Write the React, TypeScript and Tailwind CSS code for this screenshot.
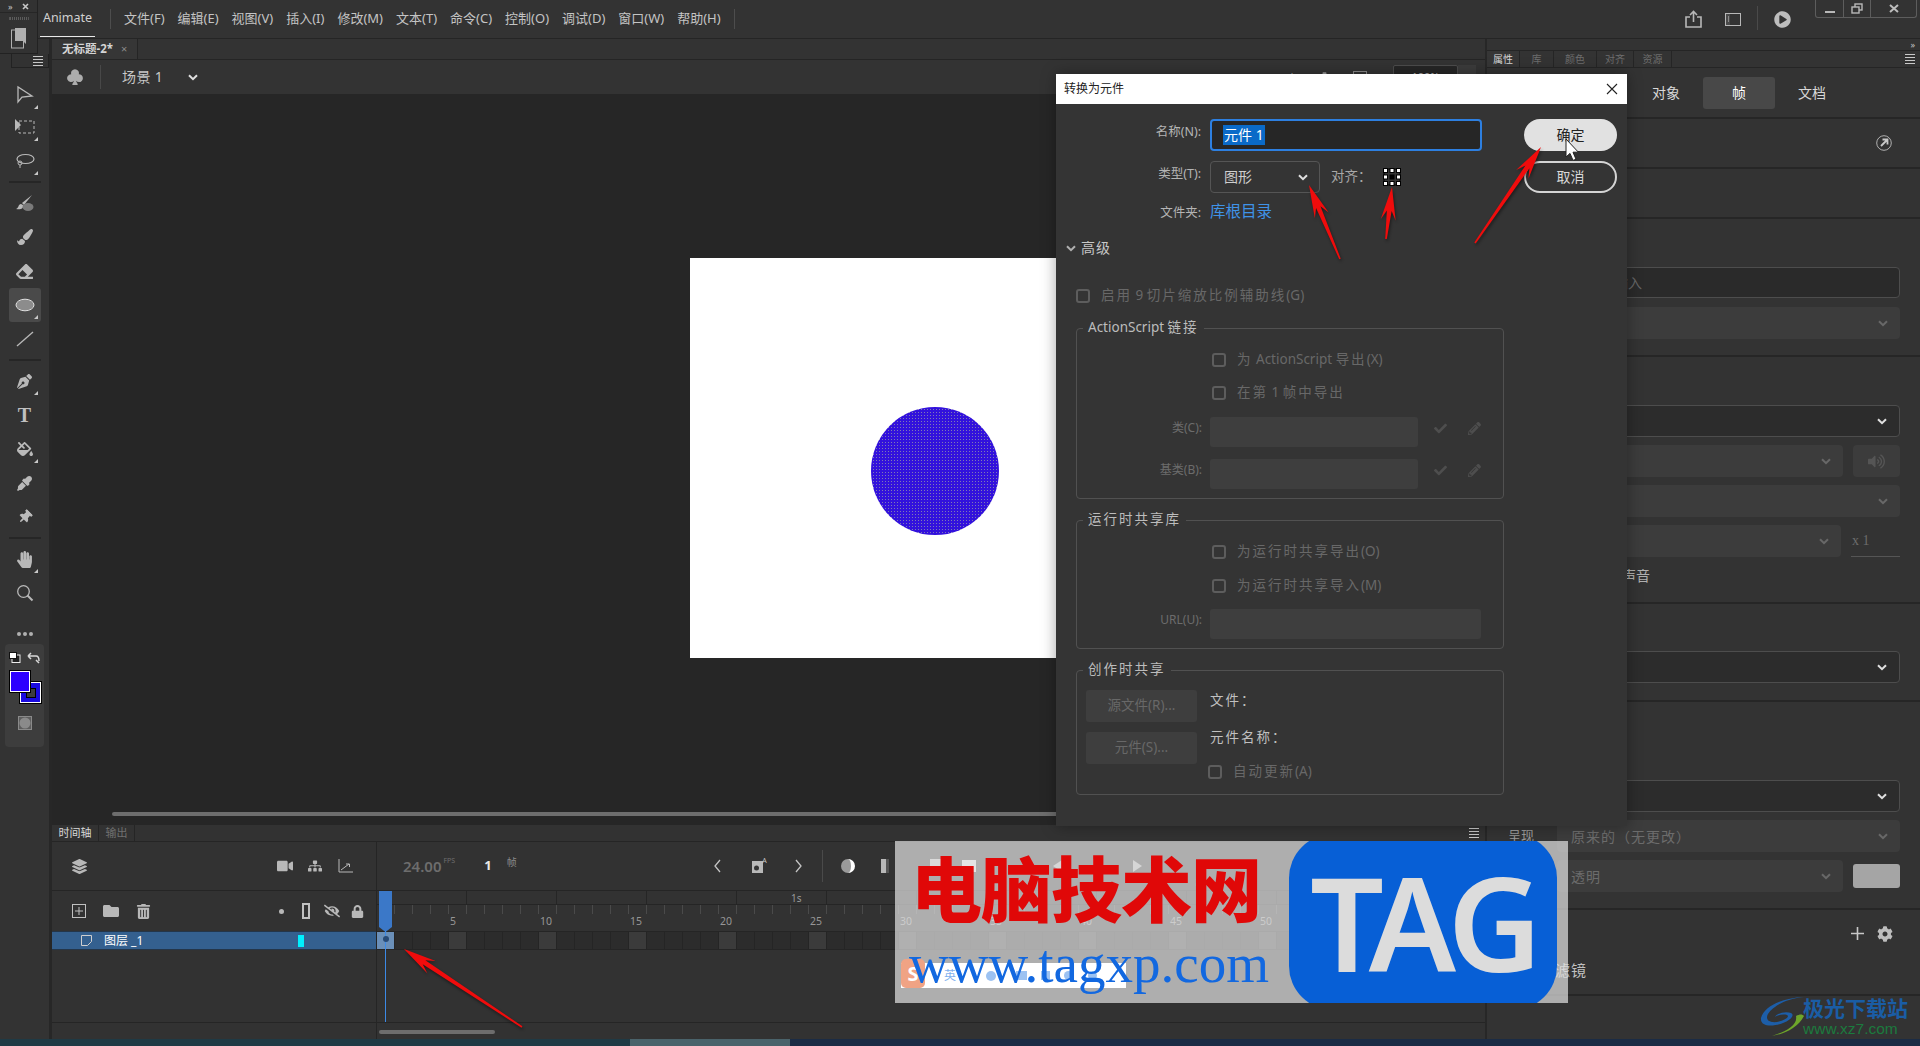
import React from "react";
import {
  FaHandPaper, FaPaintBrush, FaEraser, FaFillDrip, FaPenNib, FaEyeDropper, FaThumbtack, FaCog, FaLock,
  FaTrashAlt, FaFolder, FaVideo, FaLayerGroup, FaSitemap, FaEyeSlash, FaCheck, FaPencilAlt, FaVolumeUp, FaPlayCircle,
} from "react-icons/fa";
import { BsSuitClubFill } from "react-icons/bs";

const Chevron = ({ c = "#e0e0e0", w = 10 }: { c?: string; w?: number }) => (
  <svg width={w} height={w * 0.7} viewBox="0 0 10 7" fill="none"><path d="M1 1.2l4 4 4-4" stroke={c} strokeWidth="2" /></svg>
);
const Corner = () => (
  <span className="absolute right-[3px] bottom-[3px] w-0 h-0 border-l-[4px] border-l-transparent border-b-[4px] border-b-[#c8c8c8]" />
);
const Burger = () => (
  <div className="flex flex-col gap-[2px] w-[10px]">
    <span className="h-px bg-[#c8c8c8]" /><span className="h-px bg-[#c8c8c8]" /><span className="h-px bg-[#c8c8c8]" /><span className="h-px bg-[#c8c8c8]" />
  </div>
);
const T = ({ s }: { s: string }) => (
  <>
    {s.split(/([\u4e00-\u9fff]+)/).map((p, i) =>
      /[\u4e00-\u9fff]/.test(p) ? <span key={i} className="tracking-[2px]">{p}</span> : <span key={i}>{p}</span>
    )}
  </>
);

const Tool = ({ children, corner, active }: { children: React.ReactNode; corner?: boolean; active?: boolean }) => (
  <div className={`relative w-[32px] h-[34px] mx-auto flex items-center justify-center rounded-[3px] text-[#b9b9b9] ${active ? "bg-[#4a4a4a]" : ""}`}>
    {children}
    {corner && <Corner />}
  </div>
);
const ToolDivider = () => <div className="w-[32px] h-[2px] bg-[#262626] mx-auto my-[3px]" />;

function Toolbar() {
  return (
    <div className="w-[52px] shrink-0 bg-[#333333] border-r-[3px] border-[#272727] pt-[39px] flex flex-col">
      <Tool corner><svg width="18" height="20" viewBox="0 0 18 20" fill="none"><path d="M2 2v15l4-5 10-1z" stroke="#b9b9b9" strokeWidth="1.3" /></svg></Tool>
      <div className="-mt-[2px]"><Tool corner><svg width="22" height="18" viewBox="0 0 22 18" fill="none"><path d="M1 1v12l6-6z" fill="#b9b9b9" /><rect x="5" y="3" width="15" height="12" stroke="#b9b9b9" strokeDasharray="3 2" /></svg></Tool></div>
      <Tool corner><svg width="20" height="16" viewBox="0 0 20 16" fill="none"><ellipse cx="10.5" cy="6" rx="8.5" ry="4.5" stroke="#b9b9b9" strokeWidth="1.2" /><circle cx="5" cy="10" r="2" stroke="#b9b9b9" /><path d="M5 12v3" stroke="#b9b9b9" /></svg></Tool>
      <ToolDivider />
      <Tool><svg width="20" height="18" viewBox="0 0 20 18"><path d="M17 1 7 9l2 2z" fill="#b9b9b9" /><path d="M6 10c-3 0-2 4-5 5 4 1 8 0 7-4z" fill="#b9b9b9" /><ellipse cx="13" cy="13" rx="5.5" ry="4" fill="#7a7a7a" /></svg></Tool>
      <Tool><FaPaintBrush size={16} /></Tool>
      <Tool><FaEraser size={17} /></Tool>
      <Tool active corner><svg width="20" height="14" viewBox="0 0 20 14"><ellipse cx="10" cy="7" rx="9" ry="5.8" fill="#8c8c8c" stroke="#e0e0e0" /></svg></Tool>
      <Tool><svg width="18" height="16" viewBox="0 0 18 16"><path d="M1 15 17 1" stroke="#b9b9b9" strokeWidth="1.3" /></svg></Tool>
      <ToolDivider />
      <Tool corner><FaPenNib size={15} /></Tool>
      <Tool><span className="font-['Liberation_Serif',serif] text-[20px] font-bold leading-none text-[#c0c0c0]">T</span></Tool>
      <Tool corner><FaFillDrip size={16} /></Tool>
      <Tool><FaEyeDropper size={15} /></Tool>
      <Tool><FaThumbtack size={14} className="rotate-45" /></Tool>
      <ToolDivider />
      <Tool corner><FaHandPaper size={17} /></Tool>
      <Tool><svg width="18" height="18" viewBox="0 0 18 18" fill="none"><circle cx="7.5" cy="7.5" r="5.8" stroke="#b9b9b9" strokeWidth="1.3" /><path d="m11.5 11.5 5 5" stroke="#b9b9b9" strokeWidth="2" /></svg></Tool>
      <div className="h-[20px]" />
      <div className="flex justify-center gap-[2px] h-[8px] items-center">
        <span className="w-[4px] h-[4px] rounded-full bg-[#b0b0b0]" /><span className="w-[4px] h-[4px] rounded-full bg-[#b0b0b0]" /><span className="w-[4px] h-[4px] rounded-full bg-[#b0b0b0]" />
      </div>
      <div className="mx-[5px] mt-[6px] h-[103px] rounded-[4px] bg-[#3d3d3d] flex flex-col">
        <div className="flex items-center justify-between px-[4px] pt-[7px] h-[20px]">
          <svg width="12" height="11" viewBox="0 0 12 11"><rect x="3" y="3" width="8" height="7.5" fill="#222" stroke="#eee" /><rect x="0.5" y="0.5" width="7" height="6" fill="#fff" stroke="#111" /></svg>
          <svg width="13" height="12" viewBox="0 0 13 12" fill="none"><path d="M1 4h8c2 0 3 2 3 5M1 4l3-3M1 4l3 3M9 8l3 3" stroke="#d8d8d8" strokeWidth="1.5" /></svg>
        </div>
        <div className="relative h-[33px] mt-[7px]">
          <span className="absolute left-[15px] top-[11px] w-[21px] h-[21px] bg-[#1a0ae0] border border-white outline outline-1 outline-black flex items-center justify-center"><span className="w-[10px] h-[10px] bg-[#3d3d3d] border border-black" /></span>
          <span className="absolute left-[5px] top-0 w-[20px] h-[21px] bg-[#2c00ff] border border-white outline outline-1 outline-black" />
        </div>
        <div className="flex justify-center mt-[12px]"><svg width="14" height="14" viewBox="0 0 14 14"><rect width="14" height="14" fill="#8a8a8a" /><rect x="1" y="1" width="12" height="12" fill="#5d5d5d" /><circle cx="7" cy="7" r="5.5" fill="#8a8a8a" /></svg></div>
      </div>
    </div>
  );
}

const menus = ["文件(F)", "编辑(E)", "视图(V)", "插入(I)", "修改(M)", "文本(T)", "命令(C)", "控制(O)", "调试(D)", "窗口(W)", "帮助(H)"];

function TopBar() {
  return (
    <div className="h-[39px] shrink-0 bg-[#333333] border-b border-[#252525] flex items-start pl-[40px]">
      <div className="w-[55px] h-[37px] border-b border-[#e8e8e8] flex items-center justify-center text-[12.5px] text-[#d0d0d0]">Animate</div>
      <div className="w-px h-[20px] bg-[#4d4d4d] mt-[9px] ml-[15px]" />
      <div className="flex gap-[13px] ml-[13px] mt-[9px] h-[20px] items-center text-[13px] text-[#c4c4c4] whitespace-nowrap">
        {menus.map((m) => <span key={m}>{m}</span>)}
      </div>
      <div className="w-px h-[20px] bg-[#4d4d4d] mt-[9px] ml-[13px]" />
      <div className="ml-auto flex items-start pr-[3px]">
        <svg className="mt-[10px]" width="17" height="18" viewBox="0 0 17 18" fill="none"><path d="M5 7H1v10h15V7h-4M8.5 12V1.5M5 5l3.5-3.5L12 5" stroke="#b8b8b8" strokeWidth="1.6" /></svg>
        <svg className="ml-[23px] mt-[13px]" width="16" height="13" viewBox="0 0 16 13" fill="none"><rect x=".5" y=".5" width="15" height="12" stroke="#b8b8b8" /><path d="M1 1h4v11H1z" fill="#4a4a4a" /><path d="M3 4h1M3 6h1M3 8h1" stroke="#ccc" /></svg>
        <div className="ml-[16px] mt-[6px] w-px h-[24px] bg-[#4a4a4a]" />
        <FaPlayCircle className="ml-[16px] mt-[11px] text-[#bdbdbd]" size={17} />
        <div className="ml-[24px] w-[102px] h-[18px] border border-t-0 border-[#5d5d5d] rounded-b-[3px] flex">
          <div className="w-[28px] border-r border-[#5d5d5d] flex items-center justify-center pt-[4px]"><span className="w-[10px] h-[2px] bg-[#b8b8b8] mt-[2px]" /></div>
          <div className="w-[27px] border-r border-[#5d5d5d] flex items-center justify-center"><svg width="12" height="11" viewBox="0 0 12 11" fill="none"><rect x="4" y="1" width="7" height="6" stroke="#b8b8b8" strokeWidth="1.4" /><rect x="1" y="4" width="7" height="6" fill="#333" stroke="#b8b8b8" strokeWidth="1.4" /></svg></div>
          <div className="flex-1 flex items-center justify-center"><svg width="10" height="9" viewBox="0 0 10 9" fill="none"><path d="m1 1 8 7M9 1 1 8" stroke="#bdbdbd" strokeWidth="2" /></svg></div>
        </div>
      </div>
    </div>
  );
}

function Canvas() {
  return (
    <div className="flex-1 bg-[#262626] relative pl-[638px] pt-[164px]">
      <div className="relative w-[550px] h-[400px] bg-white">
        <svg className="absolute left-[180px] top-[148px]" width="130" height="130" viewBox="0 0 130 130">
          <defs>
            <pattern id="dots" width="3" height="3" patternUnits="userSpaceOnUse">
              <rect width="3" height="3" fill="#3211dc" />
              <rect width="1" height="1" fill="#7f79b4" />
            </pattern>
          </defs>
          <circle cx="65" cy="65" r="64" fill="url(#dots)" />
        </svg>
      </div>
      <div className="absolute left-[60px] right-[10px] bottom-[9px] h-[4px] rounded-full bg-[#6d6d6d]" />
    </div>
  );
}

const frames = Array.from({ length: 62 }, (_, i) => i);

function Timeline() {
  return (
    <div className="h-[214px] shrink-0 bg-[#323232] flex flex-col">
      <div className="h-[17px] shrink-0 border-b border-[#252525] flex items-stretch text-[11px] relative">
        <div className="w-[47px] flex items-center justify-center text-[#d8d8d8] border-r border-[#252525]">时间轴</div>
        <div className="w-[36px] flex items-center justify-center text-[#707070] border-r border-[#252525]">输出</div>
        <div className="ml-auto pr-[6px] flex items-center"><Burger /></div>
      </div>
      <div className="flex-1 flex min-h-0">
        <div className="w-[325px] shrink-0 border-r border-[#252525] flex flex-col">
          <div className="h-[49px] shrink-0 border-b border-[#252525] flex items-center text-[#b8b8b8]">
            <FaLayerGroup size={15} className="ml-[20px]" />
            <FaVideo size={16} className="ml-[190px]" />
            <FaSitemap size={14} className="ml-[15px]" />
            <svg className="ml-[16px]" width="15" height="14" viewBox="0 0 15 14" fill="none"><path d="M1 0v13h14" stroke="#b8b8b8" /><path d="m3 11 8-6M8 5h3.5v3" stroke="#b8b8b8" /></svg>
          </div>
          <div className="h-[40px] shrink-0 flex items-center text-[#b8b8b8]">
            <svg className="ml-[20px]" width="14" height="14" viewBox="0 0 14 14" fill="none"><rect x=".5" y=".5" width="13" height="13" stroke="#c0c0c0" /><path d="M7 3v8M3 7h8" stroke="#c0c0c0" /></svg>
            <FaFolder size={16} className="ml-[17px]" />
            <FaTrashAlt size={15} className="ml-[17px]" />
            <span className="ml-[128px] w-[5px] h-[5px] rounded-full bg-[#b8b8b8]" />
            <span className="ml-[18px] w-[8px] h-[16px] border-2 border-[#c0c0c0]" />
            <FaEyeSlash size={16} className="ml-[14px]" />
            <FaLock size={13} className="ml-[11px]" />
          </div>
          <div className="h-[19px] shrink-0 bg-[#34608f] border-y border-[#24364a] flex items-center relative text-[12px] text-white">
            <svg className="ml-[29px]" width="11" height="11" viewBox="0 0 11 11" fill="none"><path d="M.5.5h10v6l-4 4h-6z" stroke="#cfcfcf" /></svg>
            <span className="ml-[12px]">图层 _1</span>
            <span className="absolute left-[246px] top-[3px] w-[6px] h-[12px] bg-[#00f0ff]" />
          </div>
          <div className="flex-1" />
          <div className="h-[17px] shrink-0 border-t border-[#252525]" />
        </div>
        <div className="flex-1 flex flex-col min-w-0 relative overflow-hidden">
          <div className="h-[49px] shrink-0 border-b border-[#252525] flex items-center relative text-[#bdbdbd]">
            <span className="ml-[26px] text-[15px] font-semibold text-[#6d6d6d]">24.00</span>
            <span className="text-[7px] text-[#6d6d6d] ml-[2px] -mt-[9px]">FPS</span>
            <span className="ml-[29px] text-[13px] font-bold text-[#e8e8e8]">1</span>
            <span className="ml-[15px] text-[10px] text-[#8a8a8a] -mt-[8px]">帧</span>
            <span className="ml-[197px] flex"><Svg1 d="M6 1 1 7l5 6" /></span>
            <span className="ml-[31px] relative flex"><svg width="14" height="14" viewBox="0 0 14 14"><rect y="2" width="11" height="12" fill="#b8b8b8" /><circle cx="4.5" cy="9" r="2.5" fill="#333" /></svg><span className="absolute -right-[1px] -top-[3px] text-[7px] text-[#c8c8c8]">A</span></span>
            <span className="ml-[29px] flex"><Svg1 d="m1 1 5 6-5 6" /></span>
            <span className="ml-[20px] w-px h-[32px] bg-[#4a4a4a]" />
            <span className="ml-[18px] w-[14px] h-[14px] rounded-full bg-[#9a9a9a] border-r-[4px] border-white" />
            <span className="ml-[26px] w-[8px] h-[14px] bg-[#b8b8b8] border-r-[3px] border-[#555]" />
            <span className="ml-[41px] w-[14px] h-[14px] bg-[#c8c8c8]" />
            <span className="ml-[18px] w-[14px] h-[12px] bg-[#e8e8e8]" />
            <span className="ml-[77px] w-0 h-0 border-y-[6px] border-y-transparent border-r-[9px] border-r-[#b8b8b8]" />
            <span className="ml-[31px] w-0 h-0 border-y-[7px] border-y-transparent border-l-[11px] border-l-[#ff7777]" />
            <span className="ml-[29px] w-0 h-0 border-y-[6px] border-y-transparent border-l-[9px] border-l-[#b8b8b8]" />
            <span className="ml-[173px] w-[12px] h-[12px] rounded-full border-2 border-[#4a89dc]" />
            <span className="ml-[2px] w-[40px] h-[2px] bg-[#4a89dc]" />
            <span className="w-[10px] h-[10px] rounded-full border-2 border-[#4a89dc]" />
            <span className="ml-[60px] w-0 h-0 border-x-[9px] border-x-transparent border-b-[12px] border-b-[#3b6fb5]" />
          </div>
          <div className="h-[40px] shrink-0 relative">
            <div className="flex h-[14px] border-b border-[#252525]">
              {Array.from({ length: 13 }, (_, i) => <div key={i} className="w-[90px] shrink-0 border-r border-[#252525]" />)}
            </div>
            <span className="absolute left-[414px] top-[0px] text-[10px] text-[#9a9a9a]">1s</span>
            <div className="flex h-[9px]">
              {frames.map((i) => <div key={i} className="w-[18px] shrink-0 border-r border-[#4a4a4a]" />)}
            </div>
            <div className="flex">
              {frames.map((i) => <span key={i} className="w-[18px] shrink-0 text-[10.5px] leading-[14px] pl-[1px] text-[#969696] whitespace-nowrap">{(i + 1) % 5 === 0 ? i + 1 : ""}</span>)}
            </div>
          </div>
          <div className="h-[19px] shrink-0 flex border-y border-[#252525] bg-[#2c2c2c]">
            {frames.map((i) => (
              <div key={i} className={`w-[18px] shrink-0 border-r border-[#252525] ${i === 0 ? "bg-[#6a8fb8]" : (i + 1) % 5 === 0 ? "bg-[#3b3b3b]" : ""}`} />
            ))}
          </div>
          <div className="flex-1" />
          <div className="h-[17px] shrink-0 border-t border-[#252525] relative">
            <span className="absolute left-[2px] top-[7px] w-[116px] h-[4px] rounded-full bg-[#6d6d6d]" />
          </div>
          <div className="absolute left-[2px] top-[49px] flex flex-col items-center w-[13px]">
            <svg width="13" height="41" viewBox="0 0 13 41"><path d="M0 0h13v36l-6.5 5L0 36z" fill="#3b78c8" /></svg>
          </div>
          <span className="absolute left-[8px] top-[89px] bottom-[17px] w-px bg-[#3c8ae6]" />
          <span className="absolute left-[6px] top-[94px] w-[6px] h-[6px] rounded-full bg-[#274a76]" />
        </div>
      </div>
    </div>
  );
}
const Svg1 = ({ d }: { d: string }) => (
  <svg width="7" height="14" viewBox="0 0 7 14" fill="none"><path d={d} stroke="#c4c4c4" strokeWidth="1.3" /></svg>
);

const DarkSelect = ({ mt = "" }: { mt?: string }) => (
  <div className={`h-[32px] bg-[#2c2c2c] border border-[#4d4d4d] rounded-[4px] flex items-center justify-end pr-[12px] ${mt}`}><Chevron /></div>
);
const DisSelect = ({ children, cls = "" }: { children?: React.ReactNode; cls?: string }) => (
  <div className={`h-[32px] bg-[#3c3c3c] rounded-[4px] flex items-center justify-between pl-[14px] pr-[12px] text-[14px] text-[#6c6c6c] flex-1 ${cls}`}>
    <span className="tracking-[1px]">{children}</span><Chevron c="#686868" />
  </div>
);
const Sep = () => <div className="h-[2px] shrink-0 bg-[#262626]" />;

function RightPanel() {
  return (
    <div className="w-[435px] shrink-0 bg-[#333333] border-l-2 border-[#272727] flex flex-col text-[#bdbdbd]">
      <div className="h-[12px] shrink-0 border-b border-[#252525] flex items-center justify-end pr-[5px] text-[9px] leading-none text-[#c4c4c4]">»</div>
      <div className="h-[17px] shrink-0 border-b border-[#252525] flex text-[10px] text-[#6e6e6e] items-stretch">
        <span className="w-[33px] flex items-center justify-center text-[#d8d8d8] border-r border-[#252525] bg-[#363636]">属性</span>
        <span className="w-[34px] flex items-center justify-center border-r border-[#252525]">库</span>
        <span className="w-[43px] flex items-center justify-center border-r border-[#252525]">颜色</span>
        <span className="w-[37px] flex items-center justify-center border-r border-[#252525]">对齐</span>
        <span className="w-[38px] flex items-center justify-center border-r border-[#252525]">资源</span>
        <div className="ml-auto pr-[5px] flex items-center"><Burger /></div>
      </div>
      <div className="h-[49px] shrink-0 flex items-center text-[14px] text-[#d8d8d8]">
        <span className="ml-[165px]">对象</span>
        <span className="ml-[23px] w-[72px] h-[32px] rounded-[3px] bg-[#484848] flex items-center justify-center text-white">帧</span>
        <span className="ml-[23px]">文档</span>
      </div>
      <Sep />
      <div className="h-[48px] shrink-0 flex items-center justify-end pr-[28px]">
        <svg width="16" height="16" viewBox="0 0 16 16" fill="none"><circle cx="8" cy="8" r="7.3" stroke="#b0b0b0" /><path d="M5 11l6-6M6.5 4.5h5v5" stroke="#c8c8c8" strokeWidth="1.8" /></svg>
      </div>
      <Sep />
      <div className="h-[48px] shrink-0" />
      <Sep />
      <div className="h-[136px] shrink-0 pt-[48px] pl-[70px] pr-[20px]">
        <div className="h-[31px] bg-[#2a2a2a] border border-[#4d4d4d] rounded-[4px] flex items-center pl-[56px] text-[14px] text-[#666]">输入</div>
        <div className="mt-[9px] flex"><DisSelect /></div>
      </div>
      <Sep />
      <div className="h-[245px] shrink-0 pt-[48px] pl-[70px] pr-[20px] flex flex-col">
        <DarkSelect />
        <div className="mt-[8px] flex gap-[10px]"><DisSelect /><div className="w-[47px] h-[32px] rounded-[4px] bg-[#3c3c3c] flex items-center justify-center"><FaVolumeUp size={17} className="text-[#555]" /></div></div>
        <div className="mt-[8px] flex"><DisSelect /></div>
        <div className="mt-[8px] flex items-center gap-[10px]"><DisSelect /><div className="w-[49px] h-[32px] border-b border-[#555] text-[14px] text-[#6c6c6c] font-['Liberation_Serif',serif] flex items-center pl-[1px]">x 1</div></div>
        <div className="mt-[8px] text-[14px] text-[#b0b0b0] pl-[37px]">同步声音</div>
      </div>
      <Sep />
      <div className="h-[96px] shrink-0 pt-[47px] pl-[70px] pr-[20px]"><DarkSelect /></div>
      <Sep />
      <div className="h-[206px] shrink-0 pt-[78px] pl-[21px] pr-[20px] flex flex-col gap-[8px]">
        <div className="ml-[49px]"><DarkSelect /></div>
        <div className="flex items-center">
          <span className="w-[49px] text-[13px] text-[#9a9a9a]">呈现</span>
          <DisSelect>原来的（无更改）</DisSelect>
        </div>
        <div className="flex items-center gap-[10px] ml-[49px]">
          <DisSelect>透明</DisSelect>
          <div className="w-[47px] h-[24px] rounded-[3px] bg-[#a5a5a5]" />
        </div>
      </div>
      <Sep />
      <div className="h-[84px] shrink-0 relative pl-[25px] pt-[13px]">
        <div className="flex items-center text-[14px] text-[#f0f0f0]">
          <Chevron c="#d0d0d0" />
          <span className="ml-[6px]">滤镜</span>
          <span className="ml-auto mr-[27px] flex items-center gap-[13px]">
            <svg width="13" height="13" viewBox="0 0 13 13"><path d="M6.5 0v13M0 6.5h13" stroke="#c8c8c8" strokeWidth="1.6" /></svg>
            <FaCog size={16} className="text-[#bdbdbd]" />
          </span>
        </div>
        <div className="mt-[15px] -ml-[5px] text-[15px] tracking-[1px] text-[#c0c0c0]">未添加滤镜</div>
      </div>
      <Sep />
      <div className="flex-1" />
    </div>
  );
}

const Check = ({ label, cls = "" }: { label: string; cls?: string }) => (
  <div className={`flex items-center gap-[11px] h-[20px] text-[13.5px] text-[#686868] whitespace-nowrap ${cls}`}>
    <span className="w-[14px] h-[14px] border-2 border-[#5d5d5d] rounded-[3px] shrink-0" />
    <span className="pb-[2px]"><T s={label} /></span>
  </div>
);
const Group = ({ title, h, children }: { title: string; h: string; children: React.ReactNode }) => (
  <div className={`relative ml-[20px] w-[428px] border border-[#515151] rounded-[4px] ${h}`}>
    <span className="absolute left-[6px] -top-[12px] h-[20px] px-[5px] bg-[#343434] text-[13.5px] text-[#bcbcbc] leading-[20px] whitespace-nowrap"><T s={title} /></span>
    {children}
  </div>
);
const DisInput = ({ label, w, icons, mt }: { label: string; w: string; icons?: boolean; mt: string }) => (
  <div className={`flex items-center ${mt}`}>
    <span className="w-[125px] text-right text-[12px] text-[#6c6c6c] pb-[8px]">{label}</span>
    <div className={`ml-[8px] h-[30px] bg-[#3e3e3e] rounded-[3px] ${w}`} />
    {icons && (
      <>
        <FaCheck size={13} className="ml-[16px] mb-[8px] text-[#4e4e4e]" />
        <FaPencilAlt size={13} className="ml-[21px] mb-[8px] text-[#4e4e4e]" />
      </>
    )}
  </div>
);
const regs = [1.5, 8, 14.5];

function Dialog() {
  return (
    <div className="absolute left-[1056px] top-[74px] w-[571px] h-[752px] bg-[#343434] shadow-[0_0_14px_rgba(0,0,0,0.35)] flex flex-col">
      <div className="h-[30px] shrink-0 bg-white flex items-center justify-between pl-[8px] pr-[9px] text-[12px] text-[#222]">
        <span>转换为元件</span>
        <svg width="12" height="12" viewBox="0 0 12 12" fill="none"><path d="m1 1 10 10M11 1 1 11" stroke="#222" strokeWidth="1.1" /></svg>
      </div>
      <div className="flex items-center mt-[15px] h-[32px]">
        <span className="w-[145px] text-right text-[12.5px] text-[#b4b4b4] pb-[6px]">名称(N):</span>
        <div className="ml-[9px] w-[272px] h-[32px] bg-[#262626] border-2 border-[#2d7fe0] rounded-[4px] flex items-center pl-[11px]">
          <span className="bg-[#0a6ac8] text-white text-[14px] leading-[19px] px-[1px] pb-[1px]">元件 1</span>
        </div>
        <button className="ml-[42px] w-[93px] h-[32px] rounded-full bg-[#e1e1e1] text-[14px] text-[#222] pb-[2px]">确定</button>
      </div>
      <div className="flex items-center mt-[10px] h-[32px]">
        <span className="w-[145px] text-right text-[12.5px] text-[#b4b4b4] pb-[6px]">类型(T):</span>
        <div className="ml-[9px] w-[110px] h-[32px] border border-[#555] rounded-[4px] flex items-center justify-between pl-[13px] pr-[11px] text-[14px] text-[#cfcfcf]">
          <span className="pb-[2px]">图形</span><Chevron />
        </div>
        <span className="ml-[11px] text-[13.5px] text-[#a8a8a8] pb-[2px]">对齐：</span>
        <svg className="ml-[10px]" width="20" height="20" viewBox="0 0 20 20" fill="none">
          <rect x="2" y="2" width="16" height="16" stroke="#111" strokeWidth="1.5" />
          {regs.map((y) => regs.map((x) => (
            <rect key={`${x}-${y}`} x={x} y={y} width="4" height="4" fill={x === 8 && y === 8 ? "#000" : "#fff"} stroke="#000" strokeWidth="1" />
          )))}
        </svg>
        <button className="ml-auto mr-[10px] w-[93px] h-[32px] rounded-full border-2 border-[#d4d4d4] text-[14px] text-[#d8d8d8] pb-[2px]">取消</button>
      </div>
      <div className="flex items-center mt-[10px] h-[20px]">
        <span className="w-[145px] text-right text-[12.5px] text-[#b4b4b4]">文件夹:</span>
        <span className="ml-[9px] text-[15.5px] text-[#3f93e8] pb-[2px]">库根目录</span>
      </div>
      <div className="flex items-center mt-[15px] h-[20px] pl-[10px] text-[14px] text-[#c8c8c8]">
        <Chevron c="#b0b0b0" />
        <span className="ml-[5px] pb-[2px] tracking-[1px]">高级</span>
      </div>
      <Check label="启用 9 切片缩放比例辅助线(G)" cls="mt-[28px] ml-[20px]" />
      <div className="mt-[22px]">
        <Group title="ActionScript 链接" h="h-[171px]">
          <div className="pt-[21px] pl-[135px]">
            <Check label="为 ActionScript 导出(X)" />
            <Check label="在第 1 帧中导出" cls="mt-[13px]" />
          </div>
          <DisInput label="类(C):" w="w-[208px]" icons mt="mt-[14px]" />
          <DisInput label="基类(B):" w="w-[208px]" icons mt="mt-[12px]" />
        </Group>
      </div>
      <div className="mt-[21px]">
        <Group title="运行时共享库" h="h-[129px]">
          <div className="pt-[21px] pl-[135px]">
            <Check label="为运行时共享导出(O)" />
            <Check label="为运行时共享导入(M)" cls="mt-[14px]" />
          </div>
          <DisInput label="URL(U):" w="w-[271px]" mt="mt-[13px]" />
        </Group>
      </div>
      <div className="mt-[21px]">
        <Group title="创作时共享" h="h-[125px]">
          <div className="flex pl-[9px] pt-[19px]">
            <div className="w-[111px] flex flex-col gap-[10px] shrink-0">
              <div className="h-[32px] bg-[#3e3e3e] rounded-[3px] flex items-center justify-center text-[13.5px] text-[#686868] pb-[2px]">源文件(R)...</div>
              <div className="h-[32px] bg-[#3e3e3e] rounded-[3px] flex items-center justify-center text-[13.5px] text-[#686868] pb-[2px]">元件(S)...</div>
            </div>
            <div className="ml-[13px] flex flex-col">
              <span className="h-[22px] text-[13.5px] text-[#c0c0c0] leading-[20px]"><T s="文件：" /></span>
              <span className="mt-[15px] h-[22px] text-[13.5px] text-[#c0c0c0] leading-[20px]"><T s="元件名称：" /></span>
              <Check label="自动更新(A)" cls="mt-[13px] -ml-[2px]" />
            </div>
          </div>
        </Group>
      </div>
    </div>
  );
}

const arrowPts = (x1: number, y1: number, x2: number, y2: number) => {
  const l = Math.hypot(x2 - x1, y2 - y1);
  const ux = (x2 - x1) / l, uy = (y2 - y1) / l, nx = -uy, ny = ux;
  const p = (a: number, b: number) => `${x2 - ux * a + nx * b},${y2 - uy * a + ny * b}`;
  return [
    `${x1 + nx * 0.8},${y1 + ny * 0.8}`,
    p(24, 2.4), p(33, 7.5), p(0, 0), p(33, -7.5), p(24, -2.4),
    `${x1 - nx * 0.8},${y1 - ny * 0.8}`,
  ].join(" ");
};
const arrows = [
  [1340, 259, 1309, 185],
  [1386, 239, 1392, 187],
  [1475, 243, 1541, 147],
  [522, 1027, 404, 949],
];

function Overlays() {
  return (
    <>
      {/* floating collapsed panel */}
      <div className="absolute left-0 top-0 w-[38px] h-[54px] bg-[#323232] border-r border-b border-[#222] flex flex-col">
        <div className="h-[13px] flex items-center justify-between px-[8px] text-[9px] leading-none text-[#c8c8c8] border-b border-[#262626]">
          <span>»</span>
          <svg width="7" height="7" viewBox="0 0 7 7"><path d="m1 1 5 5M6 1 1 6" stroke="#c8c8c8" strokeWidth="1.6" /></svg>
        </div>
        <div className="mx-auto mt-[4px] w-[20px] h-[3px] border-x border-[#555] bg-[repeating-linear-gradient(90deg,#5c5c5c_0_1px,transparent_1px_2px)]" />
        <div className="mx-auto mt-[7px]">
          <svg width="16" height="22" viewBox="0 0 16 22" fill="none"><rect x="0.5" y="3" width="12" height="18" stroke="#b0b0b0" /><path d="M4 1h11v16l-3-3H4z" fill="#b0b0b0" /></svg>
        </div>
      </div>
      <div className="absolute left-[11px] top-[54px] w-[38px] h-[14px] border-r border-b border-l border-[#222] bg-[#323232] flex items-center justify-end pr-[5px]"><Burger /></div>

      <Dialog />

      {/* site watermark */}
      <div className="absolute left-[895px] top-[841px] w-[673px] h-[162px] bg-[rgba(227,227,227,0.7)] flex overflow-hidden">
        <div className="w-[394px] shrink-0 flex flex-col items-center">
          <span className="mt-[2px] ml-[-12px] font-['Noto_Sans_CJK_SC',sans-serif] font-black text-[71px] leading-[84px] text-[#e00808] whitespace-nowrap tracking-[-1px]">电脑技术网</span>
        </div>
        <div className="w-[268px] h-[176px] -mt-[7px] rounded-[44px] bg-[#075fd6] flex items-center justify-center font-['Noto_Sans',sans-serif] font-semibold text-[130px] leading-none text-[#dcdcdc] tracking-[-6px]">TAG</div>
      </div>
      <div className="absolute left-[901px] top-[963px] w-[225px] h-[25px] bg-white flex items-center text-[#7fb0ee] text-[12px]">
        <span className="w-[24px] h-[29px] -mt-[5px] rounded-[5px] bg-[#f0a384] text-white font-bold text-[20px] leading-[29px] text-center">S</span>
        <span className="ml-[19px]">英</span>
        <span className="ml-[30px] w-[10px] h-[10px] rounded-full bg-[#9cc2f2]" />
        <span className="ml-[20px] w-[11px] h-[9px] bg-[#9cc2f2]" />
        <span className="ml-[14px] w-[9px] h-[9px] bg-[#9cc2f2]" />
        <span className="ml-[14px] w-[9px] h-[9px] rounded-full bg-[#9cc2f2]" />
        <span className="ml-[15px] w-[9px] h-[9px] rounded-full bg-[#9cc2f2]" />
      </div>
      <span className="absolute left-[909px] top-[937px] font-['Liberation_Serif',serif] text-[55px] leading-[54px] text-[#1268e0] whitespace-nowrap">www.tagxp.com</span>

      {/* corner watermark */}
      <div className="absolute left-[1760px] top-[995px] w-[155px] h-[42px] flex items-center">
        <svg width="44" height="40" viewBox="0 0 44 40" fill="none">
          <path d="M44 1C22 2 4 10 1 22c-1 9 12 9 22 5 8-3 12-8 8-10-5-2-14 0-16 4 4-3 12-3 13-1 0 3-10 7-16 6-8-1-6-9 3-15C21 6 33 2 44 1z" fill="#1d5ea8" />
          <path d="M44 20c-6 12-20 18-32 20 12-4 26-10 24-20 4-2 6-2 8 0z" fill="#6ea62a" />
        </svg>
        <div className="flex flex-col ml-[-1px]">
          <span className="font-['Noto_Sans_CJK_SC',sans-serif] font-bold text-[21px] leading-[25px] text-[#1a5da5] whitespace-nowrap">极光下载站</span>
          <span className="font-['Liberation_Sans',sans-serif] text-[15.5px] leading-[18px] text-[#1c7a3e] whitespace-nowrap">www.xz7.com</span>
        </div>
      </div>

      {/* annotation arrows and pointer */}
      <svg className="absolute left-0 top-0 pointer-events-none" width="1920" height="1046">
        {arrows.map((a, i) => (
          <polygon key={i} points={arrowPts(a[0], a[1], a[2], a[3])} fill="#f00c0c" style={{ filter: "drop-shadow(1px 2px 1.5px rgba(0,0,0,.45))" }} />
        ))}
        <path d="M1566 139v18l4-3.6 3 7 3-1.2-3-7h5.4z" fill="#fff" stroke="#222" strokeWidth="1" />
      </svg>
    </>
  );
}

export default function App() {
  return (
    <div className="relative w-[1920px] h-[1046px] overflow-hidden bg-[#333333] flex flex-col font-['Noto_Sans','Noto_Sans_CJK_SC',sans-serif]">
      <TopBar />
      <div className="flex-1 flex min-h-0">
        <Toolbar />
        <div className="flex-1 flex flex-col min-w-0">
          <div className="h-[21px] shrink-0 border-b border-[#252525] flex">
            <div className="w-[86px] bg-[#363636] border-r border-[#252525] flex items-center pl-[10px] text-[11.5px] font-bold text-[#d4d4d4] gap-[8px]">
              <span>无标题-2*</span><span className="text-[#8a8a8a] font-normal text-[11px]">×</span>
            </div>
          </div>
          <div className="h-[34px] shrink-0 bg-[#333333] flex items-center text-[#c8c8c8]">
            <BsSuitClubFill size={18} className="ml-[14px] text-[#adadad]" />
            <span className="ml-[16px] w-px h-[24px] bg-[#484848]" />
            <span className="ml-[21px] text-[14px] tracking-[0.4px] pb-[2px]">场景 1</span>
            <span className="ml-[25px]"><Chevron /></span>
            <div className="ml-auto flex items-center text-[#9c9c9c] pr-[9px]">
              <span className="text-[14px] leading-none">+</span>
              <FaSitemap size={13} className="ml-[22px]" />
              <span className="ml-[22px] w-[14px] h-[12px] border border-[#8a8a8a]" />
              <span className="ml-[15px]"><Chevron c="#9c9c9c" /></span>
              <span className="ml-[1px] w-[65px] h-[24px] bg-[#262626] border border-[#4d4d4d] rounded-[2px] flex items-center justify-center text-[11px] text-[#bbb]">100%</span>
              <span className="w-[18px] h-[24px] bg-[#3c3c3c]" />
            </div>
          </div>
          <Canvas />
          <Timeline />
        </div>
        <RightPanel />
      </div>
      <div className="h-[7px] shrink-0 flex">
        <div className="w-[630px] bg-[#1f3a45]" />
        <div className="w-[160px] bg-[#4a636b]" />
        <div className="flex-1 bg-[#1b2c45]" />
      </div>
      <Overlays />
    </div>
  );
}
